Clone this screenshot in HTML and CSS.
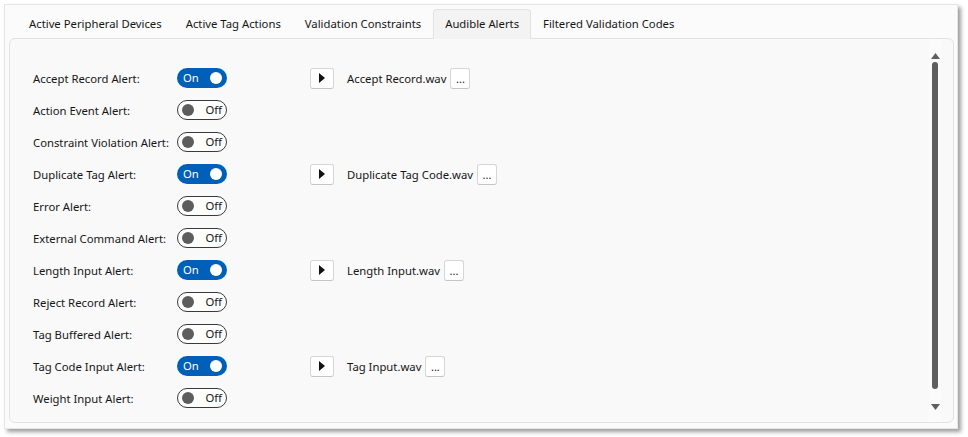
FILE: index.html
```html
<!DOCTYPE html>
<html>
<head>
<meta charset="utf-8">
<link rel="stylesheet" href="styles.css">
</head>
<body>
<div class="window">
  <div class="tabs">
    <div class="tab">Active Peripheral Devices</div>
    <div class="tab">Active Tag Actions</div>
    <div class="tab">Validation Constraints</div>
    <div class="tab selected">Audible Alerts</div>
    <div class="tab">Filtered Validation Codes</div>
  </div>
  <div class="panel">
    <div class="rows">
      <div class="row">
        <span class="label">Accept Record Alert:</span>
        <span class="toggle on"><span class="ttext">On</span><span class="knob"></span></span>
        <span class="play"><svg width="8" height="10" viewBox="0 0 8 10"><path d="M1 0 L7 5 L1 10 Z" fill="#111"/></svg></span>
        <span class="file">Accept Record.wav</span>
        <span class="browse">...</span>
      </div>
      <div class="row">
        <span class="label">Action Event Alert:</span>
        <span class="toggle off"><span class="knob"></span><span class="ttext">Off</span></span>
      </div>
      <div class="row">
        <span class="label">Constraint Violation Alert:</span>
        <span class="toggle off"><span class="knob"></span><span class="ttext">Off</span></span>
      </div>
      <div class="row">
        <span class="label">Duplicate Tag Alert:</span>
        <span class="toggle on"><span class="ttext">On</span><span class="knob"></span></span>
        <span class="play"><svg width="8" height="10" viewBox="0 0 8 10"><path d="M1 0 L7 5 L1 10 Z" fill="#111"/></svg></span>
        <span class="file">Duplicate Tag Code.wav</span>
        <span class="browse">...</span>
      </div>
      <div class="row">
        <span class="label">Error Alert:</span>
        <span class="toggle off"><span class="knob"></span><span class="ttext">Off</span></span>
      </div>
      <div class="row">
        <span class="label">External Command Alert:</span>
        <span class="toggle off"><span class="knob"></span><span class="ttext">Off</span></span>
      </div>
      <div class="row">
        <span class="label">Length Input Alert:</span>
        <span class="toggle on"><span class="ttext">On</span><span class="knob"></span></span>
        <span class="play"><svg width="8" height="10" viewBox="0 0 8 10"><path d="M1 0 L7 5 L1 10 Z" fill="#111"/></svg></span>
        <span class="file">Length Input.wav</span>
        <span class="browse">...</span>
      </div>
      <div class="row">
        <span class="label">Reject Record Alert:</span>
        <span class="toggle off"><span class="knob"></span><span class="ttext">Off</span></span>
      </div>
      <div class="row">
        <span class="label">Tag Buffered Alert:</span>
        <span class="toggle off"><span class="knob"></span><span class="ttext">Off</span></span>
      </div>
      <div class="row">
        <span class="label">Tag Code Input Alert:</span>
        <span class="toggle on"><span class="ttext">On</span><span class="knob"></span></span>
        <span class="play"><svg width="8" height="10" viewBox="0 0 8 10"><path d="M1 0 L7 5 L1 10 Z" fill="#111"/></svg></span>
        <span class="file">Tag Input.wav</span>
        <span class="browse">...</span>
      </div>
      <div class="row">
        <span class="label">Weight Input Alert:</span>
        <span class="toggle off"><span class="knob"></span><span class="ttext">Off</span></span>
      </div>
    </div>
    <div class="scrollbar">
      <svg class="arrow" width="9" height="6" viewBox="0 0 9 6"><path d="M4.5 0 L9 6 L0 6 Z" fill="#5f5f5f"/></svg>
      <div class="thumb"></div>
      <svg class="arrow" width="9" height="6" viewBox="0 0 9 6"><path d="M0 0 L9 0 L4.5 6 Z" fill="#5f5f5f"/></svg>
    </div>
  </div>
</div>
</body>
</html>
```

FILE: styles.css
```css
html, body {
  margin: 0;
  padding: 0;
  background: #ffffff;
}
body {
  font-family: "Noto Sans", "Open Sans", sans-serif;
  font-size: 11.3px;
  color: #161616;
  padding: 4px;
  width: 968px;
  height: 437px;
  box-sizing: border-box;
}
.window {
  width: 954px;
  height: 425px;
  box-sizing: border-box;
  background: #fbfbfb;
  border: 1px solid #e6e6e6;
  box-shadow: 3px 3px 4px rgba(0, 0, 0, 0.38);
  display: flex;
  flex-direction: column;
  padding: 0 3px 5px 4px;
}
.tabs {
  display: flex;
  height: 33px;
  align-items: flex-end;
  padding-left: 8px;
}
.tab {
  height: 30px;
  line-height: 28px;
  padding: 0 11px;
  box-sizing: border-box;
  white-space: nowrap;
  border: 1px solid transparent;
  border-bottom: none;
  border-radius: 4px 4px 0 0;
  margin-bottom: -1px;
}
.tab.selected {
  background: #f3f3f3;
  border-color: #e2e2e2;
  position: relative;
  z-index: 1;
}
.panel {
  flex: 1;
  background: #f9f9f9;
  border: 1px solid #e2e2e2;
  border-radius: 6px;
  display: flex;
  padding: 0 12px 0 23px;
}
.rows {
  flex: 1;
  display: flex;
  flex-direction: column;
  padding-top: 23px;
}
.row {
  height: 32px;
  display: flex;
  align-items: center;
}
.label {
  width: 144px;
  white-space: nowrap;
}
.toggle {
  width: 50px;
  height: 20px;
  box-sizing: border-box;
  border-radius: 10px;
  display: flex;
  align-items: center;
  justify-content: space-between;
}
.toggle.on {
  background: #005fb8;
  color: #ffffff;
  padding: 0 5px 0 6px;
}
.toggle.off {
  border: 1px solid #3a3a3a;
  background: #fdfdfd;
  padding: 0 4px 0 4px;
}
.knob {
  width: 12px;
  height: 12px;
  border-radius: 50%;
}
.on .knob { background: #ffffff; }
.off .knob { background: #5d5d5d; }
.ttext { line-height: 18px; }
.play {
  margin-left: 83px;
  width: 24px;
  height: 21px;
  box-sizing: border-box;
  background: #ffffff;
  border: 1px solid #d6d6d6;
  border-bottom-color: #c4c4c4;
  border-radius: 3px;
  display: flex;
  align-items: center;
  justify-content: center;
}
.file {
  margin-left: 13px;
}
.browse {
  margin-left: 4px;
  width: 20px;
  height: 21px;
  box-sizing: border-box;
  background: #ffffff;
  border: 1px solid #d6d6d6;
  border-bottom-color: #c4c4c4;
  border-radius: 3px;
  display: flex;
  align-items: center;
  justify-content: center;
  line-height: 14px;
  font-size: 11px;
  padding-top: 2px;
}
.scrollbar {
  width: 12px;
  display: flex;
  flex-direction: column;
  align-items: center;
  padding: 14px 0 12px;
  background: #fbfbfb;
  margin: 0;
}
.arrow { flex: none; }
.thumb {
  flex: 1;
  width: 6px;
  background: #5f5f5f;
  border-radius: 3px;
  margin: 3px 0 15px;
}
```
